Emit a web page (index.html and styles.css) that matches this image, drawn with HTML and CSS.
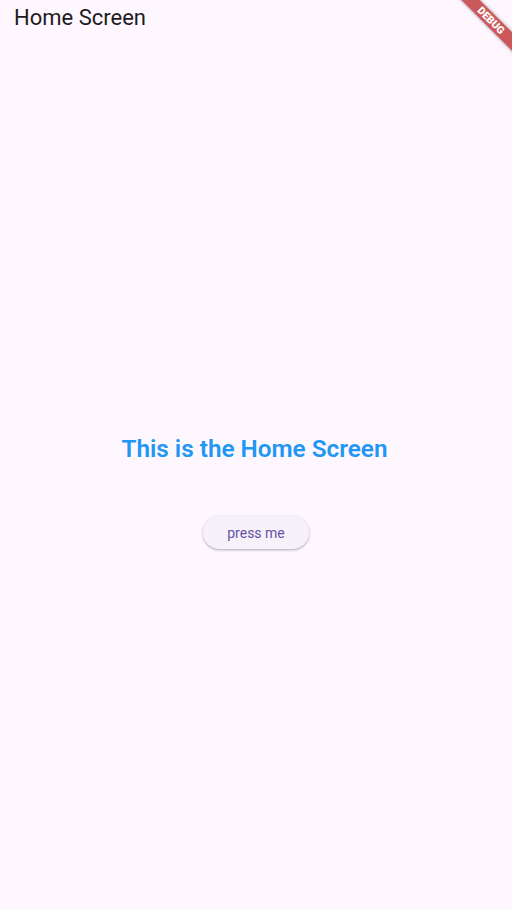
FILE: index.html
```html
<!DOCTYPE html>
<html>
<head>
<meta charset="utf-8">
<link rel="stylesheet" href="styles.css">
</head>
<body>
<div class="app">
  <header class="appbar"><h1 class="title">Home Screen</h1></header>
  <main class="content">
    <h2 class="headline">This is the Home Screen</h2>
    <button class="btn">press me</button>
  </main>
  <div class="banner">DEBUG</div>
</div>
</body>
</html>
```
FILE: styles.css
```css
html, body {
  margin: 0;
  padding: 0;
  background: #FEF7FF;
  font-family: Roboto, "Noto Sans", sans-serif;
}
.app {
  position: relative;
  width: 512px;
  height: 910px;
  overflow: hidden;
  display: flex;
  flex-direction: column;
}
.appbar {
  height: 36px;
  padding: 4px 14px 0;
  box-sizing: border-box;
}
.title {
  margin: 0;
  font-size: 22px;
  font-weight: 400;
  line-height: 28px;
  color: #1D1B20;
}
.content {
  flex: 1;
  display: flex;
  flex-direction: column;
  align-items: center;
  padding-top: 397px;
}
.headline {
  margin: 0 3px 0 0;
  font-size: 24.3px;
  font-weight: 600;
  line-height: 32px;
  color: #2196F3;
}
.btn {
  margin-top: 51px;
  height: 33px;
  padding: 0 24px;
  border: none;
  border-radius: 17px;
  background: #F7F2FA;
  color: #6750A4;
  font-family: Roboto, sans-serif;
  font-size: 14px;
  font-weight: 400;
  box-shadow: 0 1px 2px rgba(0,0,0,0.22), 0 1px 3px 1px rgba(0,0,0,0.08);
}
.banner {
  position: absolute;
  left: 451px;
  top: 14px;
  width: 80px;
  height: 13px;
  line-height: 13px;
  transform: rotate(45deg);
  background: rgba(183, 28, 28, 0.72);
  color: #fff;
  font-family: Roboto, sans-serif;
  font-size: 10.5px;
  font-weight: 900;
  text-align: center;
  box-shadow: 0 0 4px rgba(0,0,0,0.35);
}
```
